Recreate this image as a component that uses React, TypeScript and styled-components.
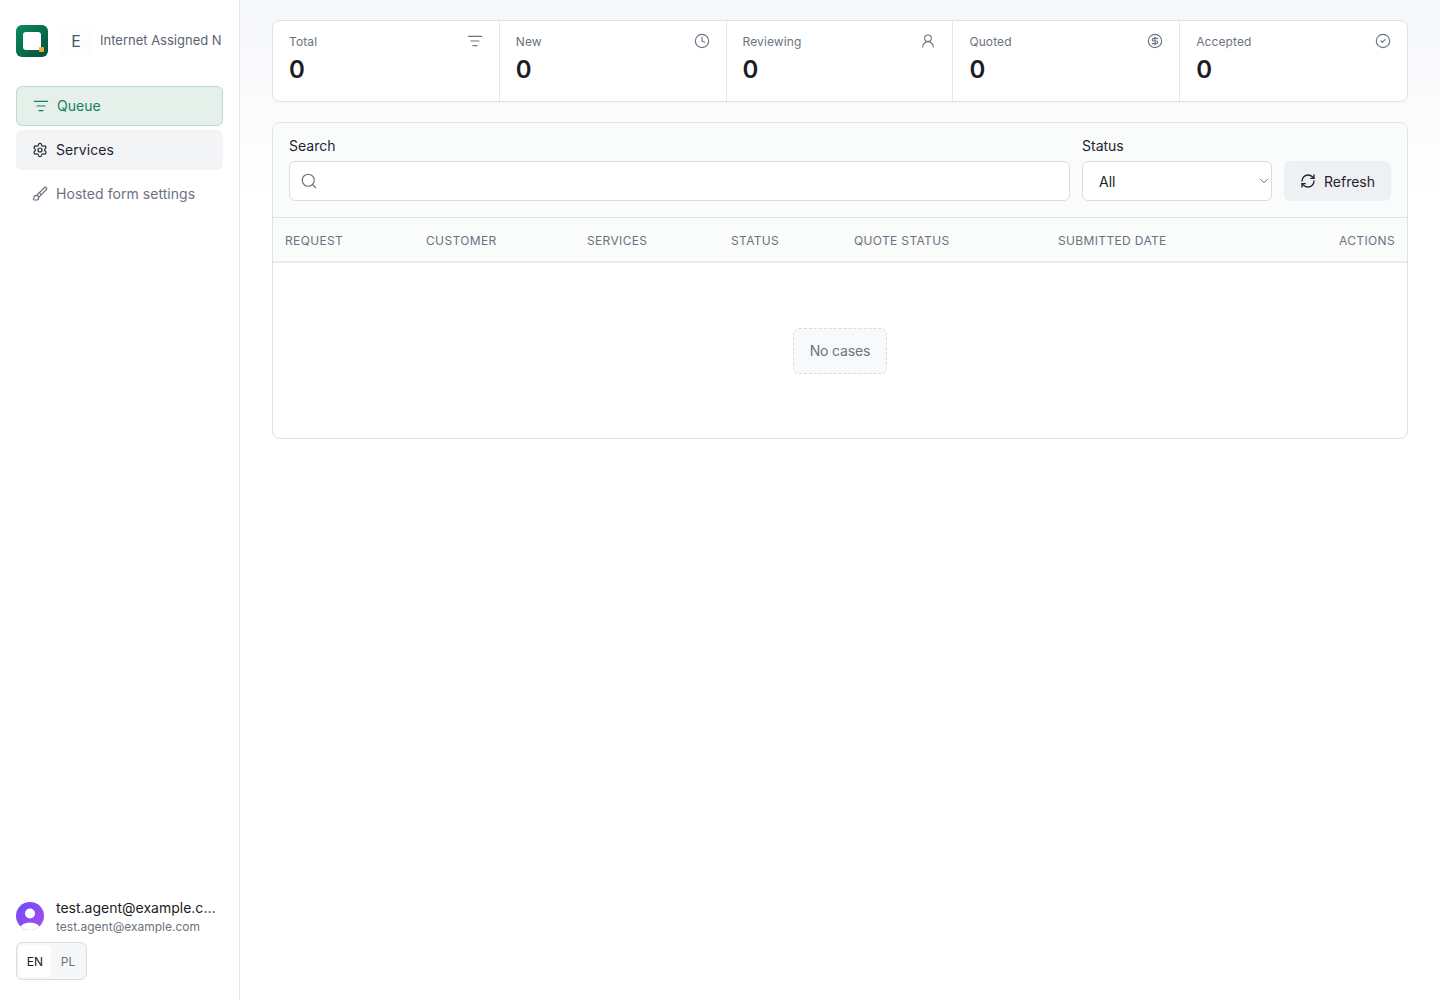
import styled, { createGlobalStyle } from "styled-components";
import {
  Brush,
  ChevronDown,
  CircleCheck,
  CircleDollarSign,
  Clock,
  ListFilter,
  RefreshCw,
  Search,
  Settings,
  UserRound,
} from "lucide-react";
import type { ReactNode } from "react";

const GlobalStyle = createGlobalStyle`
  * { box-sizing: border-box; }
  html, body { margin: 0; padding: 0; background: #fff; }
  body {
    font-family: Inter, "Noto Sans", sans-serif;
    color: #1a1d23;
    -webkit-font-smoothing: antialiased;
  }
`;

interface Stat {
  label: string;
  icon: ReactNode;
}

const stats: Stat[] = [
  { label: "Total", icon: <ListFilter size={16} strokeWidth={1.7} /> },
  { label: "New", icon: <Clock size={16} strokeWidth={1.7} /> },
  { label: "Reviewing", icon: <UserRound size={16} strokeWidth={1.7} /> },
  { label: "Quoted", icon: <CircleDollarSign size={16} strokeWidth={1.7} /> },
  { label: "Accepted", icon: <CircleCheck size={16} strokeWidth={1.7} /> },
];

const columns = [
  "Request",
  "Customer",
  "Services",
  "Status",
  "Quote status",
  "Submitted date",
  "Actions",
];

const App = () => {
  return (
    <>
      <GlobalStyle />
      <Page>
        <Sidebar>
          <Brand>
            <Logo>
              <LogoDot />
            </Logo>
            <OrgInitial>E</OrgInitial>
            <OrgName>Internet Assigned N</OrgName>
          </Brand>
          <Nav>
            <NavItem $variant="active">
              <ListFilter size={16} strokeWidth={1.8} />
              <NavLabel>Queue</NavLabel>
            </NavItem>
            <NavItem $variant="hover">
              <Settings size={16} strokeWidth={1.8} />
              <NavLabel>Services</NavLabel>
            </NavItem>
            <NavItem $variant="plain">
              <Brush size={16} strokeWidth={1.8} />
              <NavLabel>Hosted form settings</NavLabel>
            </NavItem>
          </Nav>
          <SidebarFooter>
            <UserRow>
              <Avatar>
                <svg width="28" height="28" viewBox="0 0 28 28">
                  <circle cx="14" cy="11.5" r="5" fill="#fff" />
                  <ellipse cx="14" cy="26" rx="9.5" ry="5.5" fill="#fff" />
                </svg>
              </Avatar>
              <UserText>
                <UserName>test.agent@example.com</UserName>
                <UserEmail>test.agent@example.com</UserEmail>
              </UserText>
            </UserRow>
            <LangSwitch>
              <LangButton $active>EN</LangButton>
              <LangButton>PL</LangButton>
            </LangSwitch>
          </SidebarFooter>
        </Sidebar>
        <Main>
          <StatsCard>
            {stats.map((stat) => (
              <StatCell key={stat.label}>
                <StatHead>
                  <StatLabel>{stat.label}</StatLabel>
                  <StatIcon>{stat.icon}</StatIcon>
                </StatHead>
                <StatValue>0</StatValue>
              </StatCell>
            ))}
          </StatsCard>
          <Panel>
            <Filters>
              <SearchField>
                <FieldLabel>Search</FieldLabel>
                <InputWrap>
                  <SearchIcon>
                    <Search size={18} strokeWidth={1.5} />
                  </SearchIcon>
                  <SearchInput type="text" />
                </InputWrap>
              </SearchField>
              <StatusField>
                <FieldLabel>Status</FieldLabel>
                <InputWrap>
                  <StatusSelect defaultValue="all">
                    <option value="all">All</option>
                  </StatusSelect>
                  <SelectChevron>
                    <ChevronDown size={14} strokeWidth={1.5} />
                  </SelectChevron>
                </InputWrap>
              </StatusField>
              <RefreshButton type="button">
                <RefreshCw size={16} strokeWidth={2} />
                Refresh
              </RefreshButton>
            </Filters>
            <TableHead>
              {columns.map((col) => (
                <HeadCell key={col} $right={col === "Actions"}>
                  {col}
                </HeadCell>
              ))}
            </TableHead>
            <EmptyWrap>
              <EmptyBox>No cases</EmptyBox>
            </EmptyWrap>
          </Panel>
        </Main>
      </Page>
    </>
  );
};

export default App;

const Page = styled.div`
  display: flex;
  min-height: 1000px;
`;

const Sidebar = styled.aside`
  width: 240px;
  flex-shrink: 0;
  height: 1000px;
  padding: 25px 16px 20px;
  display: flex;
  flex-direction: column;
  border-right: 1px solid #e2e5ea;
  background: #fff;
`;

const Brand = styled.div`
  display: flex;
  align-items: center;
  height: 32px;
`;

const Logo = styled.div`
  position: relative;
  width: 32px;
  height: 32px;
  flex-shrink: 0;
  border-radius: 6px;
  background: linear-gradient(135deg, #0b8a63, #06503b);

  &::before {
    content: "";
    position: absolute;
    left: 7px;
    top: 7px;
    width: 18px;
    height: 18px;
    border-radius: 3px;
    background: #fff;
  }
`;

const LogoDot = styled.span`
  position: absolute;
  right: 4px;
  bottom: 5px;
  width: 5px;
  height: 5px;
  border-radius: 1px;
  background: #f2a93b;
`;

const OrgInitial = styled.div`
  width: 32px;
  height: 32px;
  flex-shrink: 0;
  margin-left: 12px;
  border-radius: 6px;
  background: #fdfdfe;
  color: #4b5563;
  font-size: 16px;
  line-height: 32px;
  text-align: center;
`;

const OrgName = styled.div`
  margin-left: 8px;
  padding-bottom: 2px;
  color: #5b6472;
  font-size: 13px;
  line-height: 18px;
  white-space: nowrap;
`;

const Nav = styled.nav`
  display: flex;
  flex-direction: column;
  gap: 4px;
  margin-top: 29px;
`;

const navColors = {
  active: "background: #e6f0eb; border: 1px solid #bcdccf; color: #15805c; padding: 0 16px;",
  hover: "background: #f3f4f6; color: #1f2530; padding: 0 16px;",
  plain: "background: transparent; color: #6b7280; padding: 0 16px;",
};

const NavItem = styled.a<{ $variant: keyof typeof navColors }>`
  display: flex;
  align-items: center;
  gap: 8px;
  height: 40px;
  border-radius: 6px;
  font-size: 14px;
  font-weight: 400;
  ${(p) => navColors[p.$variant]}
`;

const NavLabel = styled.span`
  line-height: 20px;
  padding-bottom: 1px;
  letter-spacing: 0.05px;
`;

const SidebarFooter = styled.div`
  margin-top: auto;
`;

const UserRow = styled.div`
  display: flex;
  align-items: center;
  gap: 12px;
`;

const Avatar = styled.div`
  width: 28px;
  height: 28px;
  flex-shrink: 0;
  margin-bottom: 2px;
  border-radius: 50%;
  overflow: hidden;
  background: linear-gradient(135deg, #6d4bf5, #a94df0);
  display: flex;

  svg {
    display: block;
  }
`;

const UserText = styled.div`
  min-width: 0;
  flex: 1;
`;

const UserName = styled.div`
  font-size: 14px;
  line-height: 20px;
  color: #1a1d23;
  font-weight: 400;
  white-space: nowrap;
  overflow: hidden;
  text-overflow: ellipsis;
`;

const UserEmail = styled.div`
  font-size: 12px;
  line-height: 18px;
  color: #6b7280;
  white-space: nowrap;
`;

const LangSwitch = styled.div`
  display: inline-flex;
  gap: 1px;
  margin-top: 6px;
  padding: 2px;
  border: 1px solid #d9dde3;
  border-radius: 6px;
  background: #f6f7f9;
`;

const LangButton = styled.span<{ $active?: boolean }>`
  width: 32px;
  height: 32px;
  display: flex;
  align-items: center;
  justify-content: center;
  border-radius: 4px;
  font-size: 12px;
  font-weight: 400;
  color: ${(p) => (p.$active ? "#1a1d23" : "#6b7280")};
  background: ${(p) => (p.$active ? "#fff" : "transparent")};
`;

const Main = styled.main`
  flex: 1;
  min-width: 0;
  padding: 20px 32px;
  background: linear-gradient(#f6f7f9 0, #ffffff 200px);
`;

const StatsCard = styled.section`
  display: grid;
  grid-template-columns: repeat(5, 1fr);
  height: 82px;
  border: 1px solid #dfe2e7;
  border-radius: 8px;
  background: #fff;
  box-shadow: 0 1px 1px rgba(16, 24, 40, 0.03);
  overflow: hidden;
`;

const StatCell = styled.div`
  padding: 12px 16px;
  border-right: 1px solid #e2e5ea;

  &:last-child {
    border-right: 0;
  }
`;

const StatHead = styled.div`
  display: flex;
  align-items: flex-start;
  justify-content: space-between;
  height: 16px;
`;

const StatLabel = styled.div`
  margin-top: 1px;
  font-size: 12px;
  line-height: 16px;
  color: #6b7280;
  letter-spacing: 0.1px;
`;

const StatIcon = styled.div`
  color: #6b7280;
  display: flex;
`;

const StatValue = styled.div`
  margin-top: 5px;
  font-size: 24px;
  line-height: 32px;
  font-weight: 600;
  color: #1a1d23;
`;

const Panel = styled.section`
  margin-top: 20px;
  border: 1px solid #dfe2e7;
  border-radius: 8px;
  background: #fff;
  overflow: hidden;
`;

const Filters = styled.div`
  display: flex;
  align-items: flex-end;
  gap: 12px;
  height: 95px;
  padding: 0 16px 16px;
  background: #fafbfb;
  border-bottom: 1px solid #dfe2e7;
`;

const SearchField = styled.div`
  flex: 1;
  min-width: 0;
`;

const StatusField = styled.div`
  width: 190px;
  flex-shrink: 0;
`;

const FieldLabel = styled.div`
  font-size: 14px;
  line-height: 20px;
  margin-bottom: 5px;
  color: #1f2530;
`;

const InputWrap = styled.div`
  position: relative;
`;

const SearchIcon = styled.span`
  position: absolute;
  left: 11px;
  top: 11px;
  display: flex;
  color: #6b7280;
`;

const SearchInput = styled.input`
  display: block;
  width: 100%;
  height: 40px;
  padding: 0 12px 0 36px;
  border: 1px solid #d9dde3;
  border-radius: 6px;
  background: #fff;
  font: inherit;
  outline: none;
`;

const StatusSelect = styled.select`
  display: block;
  width: 100%;
  height: 40px;
  padding: 0 28px 0 16px;
  border: 1px solid #d9dde3;
  border-radius: 6px;
  background: #fff;
  appearance: none;
  color: #1a1d23;
  font-family: inherit;
  font-size: 14px;
  outline: none;
`;

const SelectChevron = styled.span`
  position: absolute;
  right: 1px;
  top: 13px;
  display: flex;
  color: #4b5563;
  pointer-events: none;
`;

const RefreshButton = styled.button`
  display: flex;
  align-items: center;
  justify-content: center;
  gap: 8px;
  width: 107px;
  height: 40px;
  flex-shrink: 0;
  padding: 0;
  border: 0;
  border-radius: 6px;
  background: #eff0f3;
  color: #1f2530;
  font-family: inherit;
  font-size: 14px;
  font-weight: 400;
`;

const TableHead = styled.div`
  display: grid;
  grid-template-columns: 141px 161px 144px 123px 204px 1fr auto;
  align-items: center;
  height: 45px;
  padding-top: 2px;
  background: #fafbfb;
  border-bottom: 2px solid #e8eaee;
`;

const HeadCell = styled.div<{ $right?: boolean }>`
  padding: 0 12px;
  font-size: 12px;
  font-weight: 400;
  letter-spacing: 0.35px;
  text-transform: uppercase;
  color: #6b7280;
  white-space: nowrap;
  text-align: ${(p) => (p.$right ? "right" : "left")};
`;

const EmptyWrap = styled.div`
  display: flex;
  justify-content: center;
  padding: 65px 0 64px;
`;

const EmptyBox = styled.div`
  padding: 0 16px;
  height: 46px;
  line-height: 44px;
  border: 1px dashed #d9dde3;
  border-radius: 6px;
  background: #f8f9fb;
  color: #6b7280;
  font-size: 14px;
  letter-spacing: -0.15px;
`;
